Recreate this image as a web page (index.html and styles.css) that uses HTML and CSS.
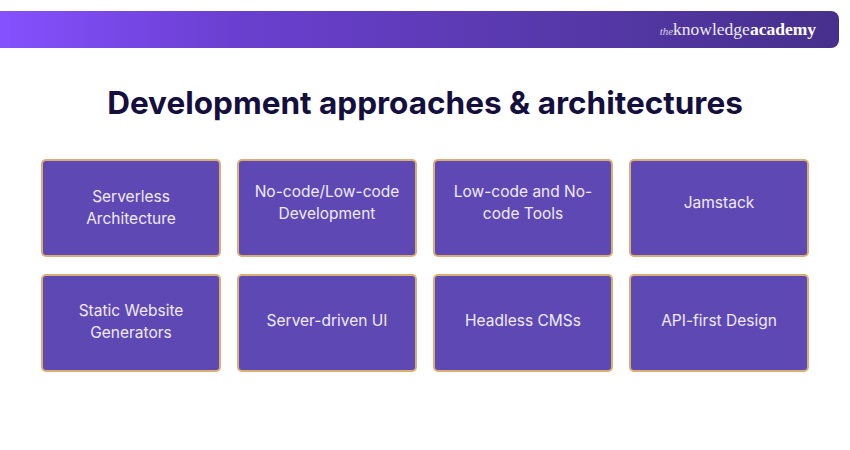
FILE: index.html
```html
<!DOCTYPE html>
<html lang="en">
<head>
<meta charset="utf-8">
<title>Development approaches &amp; architectures</title>
<link rel="stylesheet" href="styles.css">
</head>
<body>
<header class="banner">
  <div class="logo"><span class="logo-the">the</span><span class="logo-knowledge">knowledge</span><span class="logo-academy">academy</span></div>
</header>
<h1 class="title">Development approaches &amp; architectures</h1>
<main class="grid">
  <div class="card card-high">Serverless<br>Architecture</div>
  <div class="card card-top">No-code/Low-code<br>Development</div>
  <div class="card card-top">Low-code and No-<br>code Tools</div>
  <div class="card card-top">Jamstack</div>
  <div class="card">Static Website<br>Generators</div>
  <div class="card card-up">Server-driven UI</div>
  <div class="card card-up">Headless CMSs</div>
  <div class="card card-up">API-first Design</div>
</main>
</body>
</html>
```
FILE: styles.css
```css
* { box-sizing: border-box; }
html, body { margin: 0; padding: 0; }
body {
  width: 850px;
  height: 450px;
  overflow: hidden;
  background: #fff;
  font-family: "Inter", "Liberation Sans", sans-serif;
  padding-top: 11px;
}
.banner {
  width: 839px;
  height: 37px;
  border-radius: 0 8px 8px 0;
  background: linear-gradient(90deg, #8550fe 0%, #6a3fd0 28%, #5a3ab0 60%, #46308c 100%);
  display: flex;
  align-items: center;
  justify-content: flex-end;
  padding-right: 23px;
}
.logo {
  font-family: "Liberation Serif", serif;
  color: #fff;
  font-size: 17.5px;
  line-height: 1;
  white-space: nowrap;
  display: flex;
  align-items: baseline;
}
.logo-the { font-style: italic; font-size: 11px; opacity: .75; }
.logo-knowledge { font-weight: 400; opacity: .9; }
.logo-academy { font-weight: 700; }
.title {
  margin: 34px 0 0;
  height: 42px;
  text-align: center;
  font-size: 31.5px;
  line-height: 42px;
  font-weight: 700;
  color: #150f3d;
  letter-spacing: 0;
}
.grid {
  margin: 35px 0 0 41px;
  display: grid;
  grid-template-columns: repeat(4, 180px);
  grid-template-rows: 98px 98px;
  column-gap: 16px;
  row-gap: 17px;
}
.card {
  display: flex;
  align-items: center;
  justify-content: center;
  text-align: center;
  padding: 0 6px 2px;
  background: #5e48b3;
  border: 2px solid #dcae72;
  border-radius: 5px;
  color: #f0eaff;
  font-size: 15.5px;
  line-height: 22px;
}
.card-high { padding-bottom: 0; }
.card-top { padding-bottom: 10px; }
.card-up { padding-bottom: 4px; }
```
